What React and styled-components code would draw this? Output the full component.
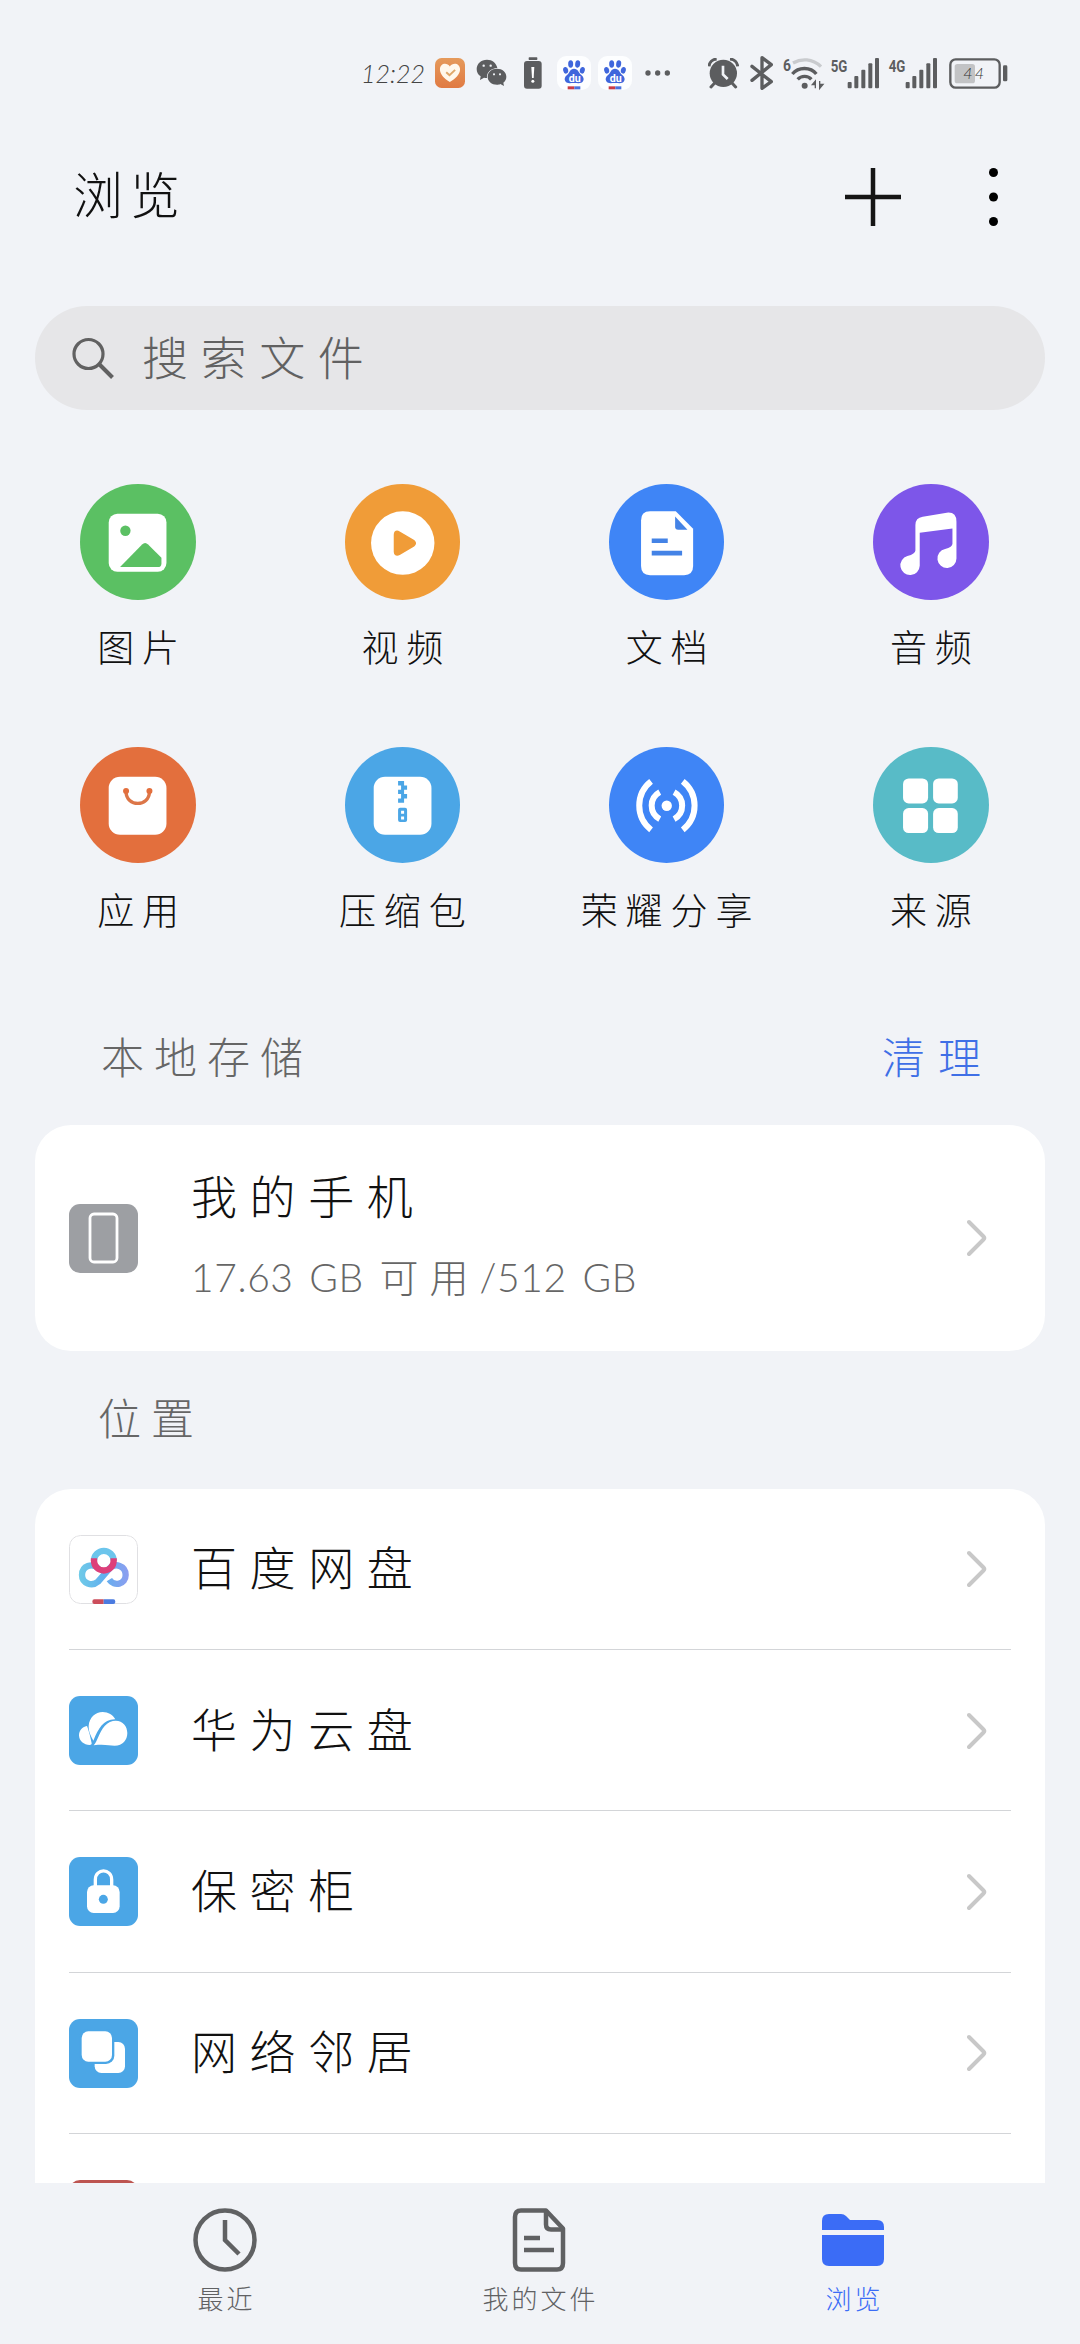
import React from 'react';
import styled, { createGlobalStyle } from 'styled-components';

const GlobalStyle = createGlobalStyle`
    * {
        box-sizing: border-box;
    }
    body {
        margin: 0;
        background-color: #f1f3f7;
    }
    svg {
        display: block;
        flex-shrink: 0;
    }
`;

const Screen = styled.div`
    display: flex;
    flex-direction: column;
    width: 1080px;
    height: 2344px;
    overflow: hidden;
    background-color: #f1f3f7;
    color: #111;
    font-family: "Noto Sans CJK SC", sans-serif;
    font-weight: 300;
`;

const StatusBar = styled.div`
    display: flex;
    align-items: center;
    height: 146px;
    padding-left: 361px;
    flex-shrink: 0;
`;

const Time = styled.span`
    width: 63px;
    font-family: "Lato", sans-serif;
    font-style: italic;
    font-weight: 300;
    font-size: 25px;
    line-height: 30px;
    white-space: nowrap;
    color: #444;
`;

const StatusIcon = styled.span`
    margin-left: ${(props) => props.$gap}px;
    flex-shrink: 0;
`;

const Header = styled.header`
    display: flex;
    align-items: center;
    height: 102px;
    padding: 0 82px 0 73px;
    flex-shrink: 0;
`;

const Title = styled.h1`
    flex: 1;
    margin: 0;
    padding-bottom: 10px;
    font-size: 50px;
    font-weight: 300;
    line-height: 60px;
    letter-spacing: 7px;
`;

const HeaderActions = styled.div`
    display: flex;
    align-items: center;
    gap: 88px;
`;

const SearchBox = styled.div`
    display: flex;
    align-items: center;
    gap: 28px;
    height: 104px;
    margin: 58px 35px 0;
    padding-left: 37px;
    border-radius: 52px;
    background-color: #e6e6e8;
    color: #616161;
    font-size: 46px;
    letter-spacing: 12.6px;
    flex-shrink: 0;
`;

const SearchHint = styled.span`
    padding-bottom: 6px;
`;

const Categories = styled.div`
    display: grid;
    grid-template-columns: repeat(4, 1fr);
    grid-auto-rows: 263px;
    margin-top: 74px;
    padding: 0 17px 0 6px;
    flex-shrink: 0;
`;

const Category = styled.div`
    display: flex;
    flex-direction: column;
    align-items: center;
`;

const CategoryIcon = styled.div`
    width: 115.5px;
    height: 116px;
    padding-top: 0.5px;
    border-radius: 50%;
    overflow: hidden;
    background-color: ${(props) => props.$color};
    & > svg {
        width: 100%;
        height: 115.5px;
    }
`;

const CategoryLabel = styled.div`
    margin-top: 24px;
    padding-left: 8px;
    font-size: 37px;
    line-height: 44px;
    letter-spacing: 8px;
    white-space: nowrap;
`;

const SectionHead = styled.div`
    display: flex;
    align-items: center;
    justify-content: space-between;
    height: ${(props) => props.$height}px;
    padding: ${(props) => props.$padding};
    font-size: 43px;
    letter-spacing: 10px;
    color: #666;
    flex-shrink: 0;
`;

const CleanLink = styled.span`
    letter-spacing: 13px;
    color: #3f6fe6;
`;

const Card = styled.div`
    margin: 0 35px;
    padding: 0 34px;
    background-color: #fff;
    border-radius: 36px;
    flex-shrink: 0;
`;

const StorageCard = styled(Card)`
    display: flex;
    align-items: center;
    height: 226px;
`;

const LocationCard = styled(Card)`
    flex: 1;
    min-height: 0;
    border-radius: 36px 36px 0 0;
    overflow: hidden;
`;

const Row = styled.div`
    display: flex;
    align-items: center;
    height: 161.33px;
    padding-top: 1px;
    border-bottom: 1px solid #d3d5d8;
    & > svg:last-child {
        margin-right: 24px;
    }
`;

const Tile = styled.div`
    width: 69px;
    height: 69px;
    border-radius: 11px;
    overflow: hidden;
    flex-shrink: 0;
    background-color: ${(props) => props.$color};
`;

const RowText = styled.div`
    flex: 1;
    margin-left: 53px;
    font-size: 46px;
    line-height: 56px;
    letter-spacing: 12.6px;
    padding-bottom: 8px;
`;

const StorageSize = styled.div`
    margin-top: 27px;
    font-family: "Lato", "Noto Sans CJK SC", sans-serif;
    font-size: 39px;
    line-height: 56px;
    letter-spacing: 0.6px;
    word-spacing: 4.5px;
    color: #666;
`;

const Spaced = styled.span`
    letter-spacing: 11px;
`;

const StorageText = styled(RowText)`
    padding-bottom: 5px;
`;

const ChevronSlot = styled.div`
    margin-right: 24px;
`;

const BottomNav = styled.nav`
    display: grid;
    grid-template-columns: repeat(3, 1fr);
    height: 161px;
    padding: 25px 70px 0 68px;
    flex-shrink: 0;
`;

const NavItem = styled.div`
    display: flex;
    flex-direction: column;
    align-items: center;
    color: ${(props) => (props.$active ? '#3b6cf6' : '#606163')};
`;

const NavLabel = styled.div`
    margin-top: 10px;
    padding-left: 3px;
    font-size: 26px;
    line-height: 32px;
    letter-spacing: 3px;
`;

const gray = '#5c5d5f';

const HealthIcon = () => (
    <svg width="30" height="30" viewBox="285 57 91 91">
        <defs>
            <linearGradient id="health" x1="0" y1="0" x2="0" y2="1">
                <stop offset="0" stopColor="#e59a5b" />
                <stop offset="1" stopColor="#e07a43" />
            </linearGradient>
        </defs>
        <rect x="285" y="57" width="91" height="91" rx="20" fill="url(#health)" />
        <path d="M330 130c-16-9-30-24-30-38 0-20 22-22 30-9 8-13 31-11 31 9 0 14-15 29-31 38z" fill="#fff8ec" />
        <path d="M319 100l10 9 17-16" fill="none" stroke="#dfa86a" strokeWidth="6" />
    </svg>
);

const WechatIcon = () => (
    <svg width="31" height="31" viewBox="408 57 93 93">
        <path d="M441 62c-18 0-31 12-31 28 0 9 4 17 12 22l-2 11 12-7c3 1 6 1 9 1-2-17 12-29 31-30-3-15-15-25-31-25z" fill={gray} />
        <path d="M471 89c-16 0-28 10-28 24s12 24 28 24c4 0 7 0 10-2l11 6-2-10c6-5 9-11 9-18 0-14-12-24-28-24z" fill={gray} />
        <g fill="#f1f3f7">
            <circle cx="431" cy="80" r="3.5" />
            <circle cx="452" cy="80" r="3.5" />
            <circle cx="462" cy="106" r="3.2" />
            <circle cx="480" cy="106" r="3.2" />
        </g>
    </svg>
);

const BatteryAlertIcon = () => (
    <svg width="18" height="32" viewBox="551 54 54 96">
        <rect x="565" y="55" width="26" height="8" rx="2" fill={gray} />
        <rect x="551" y="66" width="53" height="83" rx="9" fill={gray} />
        <path d="M573 84h9l-2 33h-5z" fill="#fff" />
        <circle cx="577.500" cy="127" r="4.500" fill="#fff" />
    </svg>
);

const BaiduIcon = () => (
    <svg width="34" height="34" viewBox="651 52 102 102">
        <rect x="651" y="52" width="102" height="102" rx="28" fill="#fdfeff" />
        <g fill="#3f66dc">
            <ellipse cx="677" cy="95" rx="7.500" ry="10" transform="rotate(-12 677 95)" />
            <ellipse cx="692" cy="76" rx="7.500" ry="11" />
            <ellipse cx="713" cy="76" rx="7.500" ry="11" transform="rotate(8 713 76)" />
            <ellipse cx="727" cy="95" rx="7.500" ry="10" transform="rotate(12 727 95)" />
            <path d="M702 90c-12 0-13 12-20 18-8 6-10 13-6 20 5 8 15 5 26 5s22 3 27-5c4-7 2-14-6-20-7-6-9-18-21-18z" />
        </g>
        <text x="704" y="130" textAnchor="middle" fontFamily="Roboto, sans-serif" fontWeight="700" fontSize="32" fill="#fff">du</text>
        <rect x="683" y="143" width="20" height="9" fill="#c93b45" />
        <rect x="703" y="143" width="18" height="9" fill="#4b72dd" />
    </svg>
);

const MoreDots = () => (
    <svg width="26" height="8" viewBox="914 88 78 24">
        <circle cx="923" cy="100" r="8" fill={gray} />
        <circle cx="952" cy="100" r="8" fill={gray} />
        <circle cx="981" cy="100" r="8" fill={gray} />
    </svg>
);

const AlarmIcon = () => (
    <svg width="31" height="31" viewBox="83 52 93 93">
        <circle cx="129" cy="98" r="41" fill={gray} />
        <path d="M86 77c1-12 10-21 23-22M172 77c-1-12-10-21-23-22" fill="none" stroke={gray} strokeWidth="9" />
        <path d="M103 127l-11 12M155 127l11 12" stroke={gray} strokeWidth="9" strokeLinecap="round" />
        <path d="M128 75v26l14 14" fill="none" stroke="#f1f3f7" strokeWidth="8" />
    </svg>
);

const BluetoothIcon = () => (
    <svg width="23" height="34" viewBox="208 47 69 102">
        <path d="M214 78l58 46-28 20V52l28 21-58 47" fill="none" stroke={gray} strokeWidth="10" strokeLinejoin="round" strokeLinecap="round" />
    </svg>
);

const WifiIcon = () => (
    <svg width="44" height="42" viewBox="301 35 132 126">
        <text x="307" y="92" fontFamily="Roboto, sans-serif" fontWeight="700" fontSize="52" textLength="24" lengthAdjust="spacingAndGlyphs" fill={gray}>6</text>
        <g fill="none" strokeWidth="10">
            <path d="M337 68c25-14 58-14 84 11" stroke="#c9cbce" />
            <path d="M335 101c18-22 55-22 72 0" stroke={gray} />
            <path d="M351 117c11-12 31-12 41 0" stroke={gray} />
        </g>
        <circle cx="372" cy="136" r="9" fill={gray} />
        <path d="M404 144v-22l-9 11h9M417 122v22l10-12h-10" fill={gray} stroke={gray} strokeWidth="4" />
    </svg>
);

const SignalIcon = ({ label }) => (
    <svg width="50" height="42" viewBox="449 35 150 126">
        <text x="451" y="94" fontFamily="Roboto, sans-serif" fontWeight="700" fontSize="52" textLength="50" lengthAdjust="spacingAndGlyphs" fill={gray}>{label}</text>
        <g fill={gray}>
            <rect x="502" y="125" width="12" height="19" rx="3" />
            <rect x="522" y="107" width="12" height="37" rx="3" />
            <rect x="543" y="88" width="12" height="56" rx="3" />
            <rect x="564" y="69" width="12" height="75" rx="3" />
            <rect x="584" y="53" width="12" height="91" rx="3" />
        </g>
    </svg>
);

const BatteryIcon = () => (
    <svg width="59" height="34" viewBox="806 47 177 102">
        <rect x="810" y="57" width="148" height="85" rx="16" fill="none" stroke={gray} strokeWidth="7" />
        <rect x="823" y="71" width="61" height="58" rx="8" fill="#c2c3c5" />
        <rect x="968" y="75" width="13" height="48" rx="4" fill={gray} />
        <text x="849" y="115" fontFamily="Lato, sans-serif" fontStyle="italic" fontWeight="300" fontSize="48" textLength="62" fill="#333">44</text>
    </svg>
);

const PlusIcon = () => (
    <svg width="56" height="58" viewBox="0 0 56 58">
        <path d="M28 0v58M0 29h56" stroke="#151515" strokeWidth="4.500" />
    </svg>
);

const MenuIcon = () => (
    <svg width="9" height="58" viewBox="0 0 9 58">
        <circle cx="4.500" cy="4.500" r="4.500" />
        <circle cx="4.500" cy="29" r="4.500" />
        <circle cx="4.500" cy="53.500" r="4.500" />
    </svg>
);

const SearchIcon = () => (
    <svg width="42" height="42" viewBox="0 0 42 42">
        <circle cx="16.500" cy="17" r="14.500" fill="none" stroke="#616161" strokeWidth="3.200" />
        <path d="M27 27l13.500 13.500" stroke="#616161" strokeWidth="4" />
    </svg>
);

const Chevron = () => (
    <svg width="20" height="38" viewBox="0 0 20 38">
        <path d="M2 3l14.500 14.500q1.500 1.500 0 3L2 35" fill="none" stroke="#c8c8c8" strokeWidth="4" strokeLinecap="round" />
    </svg>
);

// each drawing fills its category circle
const ImageIcon = () => (
    <svg viewBox="122 73 346 346">
        <rect x="208" y="159" width="173" height="174" rx="26" fill="#fff" />
        <circle cx="258" cy="210" r="15.500" fill="#5bc063" />
        <path d="M242 319l66-68q9-9 18 0l40 40v17q0 11-11 11z" fill="#5bc063" />
    </svg>
);

const VideoIcon = () => (
    <svg viewBox="915 73 346 346">
        <circle cx="1088" cy="247" r="95" fill="#fff" />
        <path d="M1061 222c0-12 9-16 18-10l42 25c9 6 9 15 0 21l-42 25c-9 5-18 1-18-10z" fill="#f09c38" />
    </svg>
);

const DocIcon = () => (
    <svg viewBox="207 73 346 346">
        <path d="M330 152h77l52 52v112q0 27-27 27H330q-27 0-27-27V179q0-27 27-27z" fill="#fff" />
        <path d="M405 167v31q0 9 9 9h28z" fill="#4483e6" />
        <path d="M335 240h48M335 277h91" stroke="#4483e6" strokeWidth="14" />
    </svg>
);

const MusicIcon = () => (
    <svg viewBox="1001 73 346 346">
        <path d="M1128 193q0-22 22-25l72-12q29-3 29 27v110a28.500 28.500 0 1 1-34-28q22-6 22-16v-46l-98 13v99a29 29 0 1 1-37-29q24-7 24-17z" fill="#fff" />
    </svg>
);

const AppIcon = () => (
    <svg viewBox="122 82 346 346">
        <rect x="208" y="168" width="173" height="174" rx="34" fill="#fff" />
        <path d="M260 212c0 48 70 48 70 0" fill="none" stroke="#dc7648" strokeWidth="10" />
        <circle cx="260" cy="211" r="9" fill="#e36f3d" />
        <circle cx="330" cy="211" r="9" fill="#e36f3d" />
    </svg>
);

const ZipIcon = () => (
    <svg viewBox="915 82 346 346">
        <rect x="1001" y="168" width="173" height="174" rx="34" fill="#fff" />
        <path d="M1074 181h18v13h9v13h-9v13h9v13h-9v13h-18v-13h9v-13h-9v-13h9v-13h-9z" fill="#4ba6e6" />
        <path fillRule="evenodd" d="M1080 261h15q6 0 6 6v31q0 6-6 6h-15q-6 0-6-6v-31q0-6 6-6zM1083 270v9h9v-9zM1083 287v9h9v-9z" fill="#4ba6e6" />
    </svg>
);

const ShareIcon = () => (
    <svg viewBox="207 82 346 346">
        <circle cx="380" cy="255" r="15.500" fill="#fff" />
        <g fill="none" stroke="#fff" strokeWidth="18">
            <path d="M359 214a46 46 0 0 0 0 81M402 214a46 46 0 0 1 0 81" />
            <path d="M333 182a92 92 0 0 0 0 145M428 182a92 92 0 0 1 0 145" />
        </g>
    </svg>
);

const SourceIcon = () => (
    <svg viewBox="1001 82 346 346">
        <g fill="#fff">
            <rect x="1091" y="173" width="75" height="75" rx="17" />
            <rect x="1181" y="173" width="74" height="75" rx="17" />
            <rect x="1091" y="262" width="75" height="75" rx="17" />
            <rect x="1181" y="262" width="74" height="75" rx="17" />
        </g>
    </svg>
);

// each drawing fills its 69px tile
const PhoneIcon = () => (
    <svg width="69" height="69" viewBox="0 0 69 69">
        <rect x="21" y="10" width="27" height="48" rx="4" fill="none" stroke="#fff" strokeWidth="2.800" />
    </svg>
);

const NetdiskIcon = () => (
    <svg width="69" height="69" viewBox="117 165 207 207">
        <defs>
            <linearGradient id="netdisk" gradientUnits="userSpaceOnUse" x1="146" y1="285" x2="297" y2="285">
                <stop offset="0" stopColor="#6fcbe8" />
                <stop offset="0.5" stopColor="#62b0ee" />
                <stop offset="1" stopColor="#8d9df0" />
            </linearGradient>
        </defs>
        <rect x="118.500" y="166.500" width="204" height="204" rx="33" fill="#fff" stroke="#e0e0e3" strokeWidth="3" />
        <g fill="none" strokeWidth="19">
            <path d="M238 299c14 22 49 14 49-14 0-28-32-38-49-19l-34 39c-18 16-48 5-48-20 0-27 31-38 49-19" stroke="url(#netdisk)" />
            <path d="M192 242a29.500 29.500 0 0 1 59 0" stroke="#6cc5ec" />
            <path d="M192 235v7a29.500 29.500 0 0 0 59 0v-7" stroke="#dd3f7a" />
        </g>
        <path d="M193 358h28v14h-28q-6 0-6-7t6-7z" fill="#cc4d5b" />
        <path d="M221 358h29q6 0 6 7t-6 7h-29z" fill="#4b7be0" />
    </svg>
);

const CloudIcon = () => (
    <svg width="69" height="69" viewBox="117 648 207 207">
        <g fill="#fff">
            <path d="M171 738c-16 3-24 15-24 28 0 17 15 29 32 29 4 0 6-2 6-5-4-19-6-30-14-52z" />
            <path d="M190 782c-6-13-15-26-14-45 2-24 20-41 42-41 17 0 31 9 38 22-36-1-51 28-66 64z" />
            <path d="M191 796c11-11 16-38 33-58 9-11 22-16 33-16 22 0 35 17 35 37 0 21-14 38-38 38-18 0-30-5-63-1z" />
        </g>
    </svg>
);

const LockIcon = () => (
    <svg width="69" height="69" viewBox="117 113 207 207">
        <path d="M196 205v-24c0-35 49-35 49 0v24" fill="none" stroke="#fff" strokeWidth="10" />
        <rect x="171" y="198" width="98" height="83" rx="20" fill="#fff" />
        <circle cx="220" cy="240" r="13.500" fill="#4ba6e6" />
    </svg>
);

const NetworkIcon = () => (
    <svg width="69" height="69" viewBox="117 597 207 207">
        <rect x="194" y="666" width="91" height="93" rx="20" fill="#fff" />
        <rect x="148" y="627" width="105" height="105" rx="25" fill="#4ba6e6" />
        <rect x="155" y="634" width="91" height="91" rx="20" fill="#fff" />
    </svg>
);

const ClockIcon = () => (
    <svg width="64" height="64" viewBox="0 0 64 64" fill="none" stroke="currentColor" strokeWidth="4.500">
        <circle cx="32" cy="32" r="29.500" />
        <path d="M32 12v20l14 14" />
    </svg>
);

const FileIcon = () => (
    <svg width="64" height="64" viewBox="0 0 64 64" fill="none" stroke="currentColor" strokeWidth="4.500">
        <path d="M14 2.500h25l17 18V55q0 6.500-6 6.500H14q-6 0-6-6.500V9q0-6.500 6-6.500z" strokeLinejoin="round" />
        <path d="M39 2.500v14q0 5 5 5h12" />
        <path d="M17 30h16M17 42h30" />
    </svg>
);

const FolderIcon = () => (
    <svg width="64" height="64" viewBox="0 0 64 64" fill="currentColor">
        <path d="M1 22v-9q0-7 7-7h12q3 0 5 2l4 4h27q7 0 7 7v3z" />
        <path d="M1 27h62v24q0 7-7 7H8q-7 0-7-7z" />
    </svg>
);

const categories = [
    { label: '图片', color: '#5bc063', Icon: ImageIcon },
    { label: '视频', color: '#f09c38', Icon: VideoIcon },
    { label: '文档', color: '#3f85f6', Icon: DocIcon },
    { label: '音频', color: '#7d56e9', Icon: MusicIcon },
    { label: '应用', color: '#e36f3d', Icon: AppIcon },
    { label: '压缩包', color: '#4ba6e6', Icon: ZipIcon },
    { label: '荣耀分享', color: '#3f85f6', Icon: ShareIcon },
    { label: '来源', color: '#58bbc7', Icon: SourceIcon },
];

const locations = [
    { label: '百度网盘', color: '#fff', Icon: NetdiskIcon },
    { label: '华为云盘', color: '#4ba6e6', Icon: CloudIcon },
    { label: '保密柜', color: '#4ba6e6', Icon: LockIcon },
    { label: '网络邻居', color: '#4ba6e6', Icon: NetworkIcon },
];

const tabs = [
    { label: '最近', Icon: ClockIcon },
    { label: '我的文件', Icon: FileIcon },
    { label: '浏览', Icon: FolderIcon, active: true },
];

const App = () => {
    return (
        <Screen>
            <GlobalStyle />
            <StatusBar>
                <Time>12:22</Time>
                <StatusIcon $gap={11}><HealthIcon /></StatusIcon>
                <StatusIcon $gap={11}><WechatIcon /></StatusIcon>
                <StatusIcon $gap={17}><BatteryAlertIcon /></StatusIcon>
                <StatusIcon $gap={15}><BaiduIcon /></StatusIcon>
                <StatusIcon $gap={7}><BaiduIcon /></StatusIcon>
                <StatusIcon $gap={13}><MoreDots /></StatusIcon>
                <StatusIcon $gap={37}><AlarmIcon /></StatusIcon>
                <StatusIcon $gap={11}><BluetoothIcon /></StatusIcon>
                <StatusIcon $gap={8}><WifiIcon /></StatusIcon>
                <StatusIcon $gap={5}><SignalIcon label="5G" /></StatusIcon>
                <StatusIcon $gap={8}><SignalIcon label="4G" /></StatusIcon>
                <StatusIcon $gap={11}><BatteryIcon /></StatusIcon>
            </StatusBar>
            <Header>
                <Title>浏览</Title>
                <HeaderActions>
                    <PlusIcon />
                    <MenuIcon />
                </HeaderActions>
            </Header>
            <SearchBox>
                <SearchIcon />
                <SearchHint>搜索文件</SearchHint>
            </SearchBox>
            <Categories>
                {categories.map(({ label, color, Icon }) => (
                    <Category key={label}>
                        <CategoryIcon $color={color}>
                            <Icon />
                        </CategoryIcon>
                        <CategoryLabel>{label}</CategoryLabel>
                    </Category>
                ))}
            </Categories>
            <SectionHead $height={115} $padding="0 86px 26px 101px">
                <span>本地存储</span>
                <CleanLink>清理</CleanLink>
            </SectionHead>
            <StorageCard>
                <Tile $color="#9d9fa3">
                    <PhoneIcon />
                </Tile>
                <StorageText>
                    我的手机
                    <StorageSize>
                        17.63 GB <Spaced>可用</Spaced>/512 GB
                    </StorageSize>
                </StorageText>
                <ChevronSlot>
                    <Chevron />
                </ChevronSlot>
            </StorageCard>
            <SectionHead $height={137.6} $padding="0 98px 7px">
                <span>位置</span>
            </SectionHead>
            <LocationCard>
                {locations.map(({ label, color, Icon }) => (
                    <Row key={label}>
                        <Tile $color={color}>
                            <Icon />
                        </Tile>
                        <RowText>{label}</RowText>
                        <Chevron />
                    </Row>
                ))}
                <Row>
                    <Tile $color="#bd5450" />
                </Row>
            </LocationCard>
            <BottomNav>
                {tabs.map(({ label, Icon, active }) => (
                    <NavItem key={label} $active={active}>
                        <Icon />
                        <NavLabel>{label}</NavLabel>
                    </NavItem>
                ))}
            </BottomNav>
        </Screen>
    );
};

export default App;
